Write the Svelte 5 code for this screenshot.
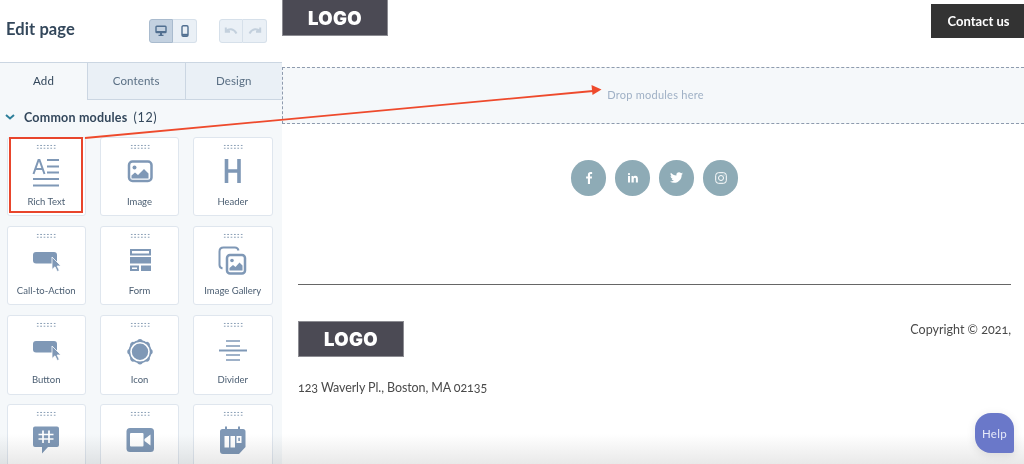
<script>
  const modules = [
    { label: "Rich Text", icon: richText },
    { label: "Image", icon: image },
    { label: "Header", icon: header },
    { label: "Call-to-Action", icon: pointer },
    { label: "Form", icon: form },
    { label: "Image Gallery", icon: gallery },
    { label: "Button", icon: pointer },
    { label: "Icon", icon: badge },
    { label: "Divider", icon: divider },
    { label: "", icon: hash },
    { label: "", icon: video },
    { label: "", icon: calendar },
  ];
  const scallops = [0, 45, 90, 135, 180, 225, 270, 315];
</script>

{#snippet richText()}
  <path class="line" d="M5.5 19 10.500 5h1l5 14M7.500 14h7" />
  <path class="line" d="M19 5h12M19 11.500h12M19 17.500h12M5 24h26M5 30.500h26" />
{/snippet}

{#snippet image()}
  <rect class="line thick" x="7" y="6.500" width="22.500" height="19.500" rx="3.500" />
  <circle class="solid" cx="12.500" cy="12.500" r="2" />
  <path class="solid" d="M9.500 23.500v-3l3.500-3 3 2.500 6-6 4.500 4.500v5z" />
{/snippet}

{#snippet header()}
  <path class="line broad" d="M11.500 4v24M24 4v24M11.500 16H24" />
{/snippet}

{#snippet pointer()}
  <rect class="solid" x="5" y="8" width="24" height="11.500" rx="3" />
  <path class="solid outlined" d="M24 13v12.500l3-2.700 2.300 4.700 2-1-2.200-4.500h3.900z" />
{/snippet}

{#snippet form()}
  <rect class="line" x="9" y="6" width="19" height="4.500" />
  <rect class="solid" x="8" y="13" width="21" height="6.500" />
  <rect class="line" x="9" y="22.500" width="7" height="3.500" />
  <rect class="solid" x="19" y="21.500" width="10" height="5.500" />
{/snippet}

{#snippet gallery()}
  <path class="line" d="M7.500 24.500C5.500 24 4.500 23 4.500 21V7.500C4.500 5 6 3.500 8.500 3.500H20c2 0 3 1 3.500 3" />
  <rect class="line thick" x="12" y="11" width="18" height="18.500" rx="3" />
  <circle class="solid" cx="17" cy="16.500" r="1.800" />
  <path class="solid" d="M14.500 26.500v-2.500l3.500-3 2.500 2 4-4.500 3 3v5z" />
{/snippet}

{#snippet badge()}
  <circle class="solid" cx="18" cy="18.700" r="11.500" />
  {#each scallops as angle}
    <circle class="solid" cx="18" cy="8.700" r="2.700" transform="rotate({angle} 18 18.700)" />
  {/each}
  <circle class="ring" cx="18" cy="18.700" r="9" />
{/snippet}

{#snippet divider()}
  <path class="line thin" d="M11 8h14M11 13h14M11 22h14M11 27h14" />
  <path class="line" d="M4 17.500h28" />
{/snippet}

{#snippet hash()}
  <path class="solid" d="M7 4.500h22a2 2 0 0 1 2 2V23a2 2 0 0 1-2 2H20l-6 6.500V25H7a2 2 0 0 1-2-2V6.500a2 2 0 0 1 2-2z" />
  <path class="cut" d="M15 8.500v12.500M21 8.500v12.500M10.500 12.500h15M10.500 17h15" />
{/snippet}

{#snippet video()}
  <rect class="solid" x="4.500" y="6" width="27.500" height="24" rx="3.500" />
  <rect class="white" x="8" y="11" width="13.500" height="13.500" rx="1" />
  <path class="white" d="M22.500 17 28.500 12.500v11L22.500 19z" />
{/snippet}

{#snippet calendar()}
  <path class="solid" d="M10 4.500h2V7h11V4.500h2V7h3a2.500 2.500 0 0 1 2.500 2.500V25L24 32H8a3 3 0 0 1-3-3V9.500A2.500 2.500 0 0 1 7.500 7H10z" />
  <path class="white" d="M9.500 14h4.500v11.500H9.500zM15.500 14H20v11.500h-4.500zM21.500 14h5v7h-5z" />
  <path class="solid" d="M23.300 15.700h1.600v3.200h-1.600z" />
{/snippet}

<div class="page">
  <aside class="sidebar">
    <header class="top">
      <h1>Edit page</h1>
      <div class="tools">
        <div class="group">
          <button class="active" aria-label="Desktop">
            <svg viewBox="0 0 12 12" width="12" height="12"><rect class="dark-line" x="1" y="1.200" width="10" height="6.300" rx=".8" /><path class="dark" d="M1 6h10v2H1zM5 8h2v2H5zM3.500 9.800h5v1.200h-5z" /></svg>
          </button>
          <button aria-label="Mobile">
            <svg viewBox="0 0 12 12" width="12" height="12"><rect class="dark-line" x="3" y=".8" width="6" height="10.400" rx="1.200" /><path class="dark" d="M3 8.800h6v2H3z" /></svg>
          </button>
        </div>
        <div class="group">
          <button aria-label="Undo">
            <svg viewBox="0 0 14 10" width="14" height="10"><path class="faint" d="M1.800 1.500v4.200H6M2.200 5.300C4.500 2.500 9.500 2 12.500 7.500" /></svg>
          </button>
          <button aria-label="Redo">
            <svg viewBox="0 0 14 10" width="14" height="10"><path class="faint" d="M12.200 1.500v4.200H8M11.800 5.300C9.500 2.500 4.500 2 1.500 7.500" /></svg>
          </button>
        </div>
      </div>
    </header>

    <nav class="tabs">
      <span class="tab current">Add</span>
      <span class="tab">Contents</span>
      <span class="tab">Design</span>
    </nav>

    <div class="section-title">
      <svg viewBox="0 0 10 6" width="10" height="6"><path d="M1 1l4 3.500L9 1" /></svg>
      <strong>Common modules</strong>
      <span>(12)</span>
    </div>

    <div class="cards">
      {#each modules as mod}
        <div class="card">
          <div class="grip"></div>
          <svg class="icon" viewBox="0 0 36 36" width="36" height="36">
            {@render mod.icon()}
          </svg>
          <span class="label">{mod.label}</span>
        </div>
      {/each}
    </div>
  </aside>

  <main class="content">
    <div class="site-header">
      <div class="logo">LOGO</div>
      <a class="contact" href="#contact">Contact us</a>
    </div>

    <div class="dropzone">Drop modules here</div>

    <div class="social">
      <span class="circle">
        <svg viewBox="0 0 24 24" width="12" height="12"><path d="M14 24V13h3.600l.5-4.200H14V6.200c0-1.200.4-2 2.100-2h2.200V.4C17.900.3 16.600 0 15.200 0 12 0 9.800 2 9.800 5.600v3.200H6.200V13h3.600v11z" /></svg>
      </span>
      <span class="circle">
        <svg viewBox="0 0 24 24" width="12" height="12"><path d="M2 8h4v13H2zM4 2a2.200 2.200 0 1 1 0 4.400A2.200 2.200 0 0 1 4 2zM9 8h3.800v1.800c.6-1 2-2.100 4-2.100 4.200 0 5 2.700 5 6.300V21h-4v-6.200c0-1.500 0-3.400-2-3.400s-2.300 1.600-2.300 3.300V21H9z" /></svg>
      </span>
      <span class="circle">
        <svg viewBox="0 0 24 24" width="13" height="13"><path d="M23.953 4.570a10 10 0 0 1-2.825.775 4.958 4.958 0 0 0 2.163-2.723c-.951.555-2.005.959-3.127 1.184a4.920 4.920 0 0 0-8.384 4.482C7.690 8.095 4.067 6.130 1.640 3.162a4.822 4.822 0 0 0-.666 2.475c0 1.710.870 3.213 2.188 4.096a4.904 4.904 0 0 1-2.228-.616v.06a4.923 4.923 0 0 0 3.946 4.827 4.996 4.996 0 0 1-2.212.085 4.936 4.936 0 0 0 4.604 3.417 9.867 9.867 0 0 1-6.102 2.105c-.39 0-.779-.023-1.170-.067a13.995 13.995 0 0 0 7.557 2.209c9.053 0 13.998-7.496 13.998-13.985 0-.21 0-.42-.015-.63A9.935 9.935 0 0 0 24 4.590z" /></svg>
      </span>
      <span class="circle">
        <svg class="insta" viewBox="0 0 12 12" width="12" height="12"><rect x=".7" y=".7" width="10.600" height="10.600" rx="2.800" /><circle cx="6" cy="6" r="2.500" /><circle class="dot" cx="9" cy="3" r=".5" /></svg>
      </span>
    </div>

    <footer class="site-footer">
      <div class="footer-left">
        <div class="logo">LOGO</div>
        <p>123 Waverly Pl., Boston, MA 02135</p>
      </div>
      <p class="copyright">Copyright © 2021,</p>
    </footer>
  </main>

  <div class="fade"></div>

  <div class="highlight"></div>
  <svg class="arrow" viewBox="0 0 1024 464" width="1024" height="464">
    <path class="shaft" d="M85 138 593 91" />
    <path class="head" d="M591.500 85 601.500 89.500 592.500 95z" />
  </svg>

  <div class="help">Help</div>
</div>

<style>
  :global(body) {
    background: #fff;
  }

  .page {
    position: relative;
    display: flex;
    width: 1024px;
    height: 464px;
    overflow: hidden;
    font-family: Lato, "Open Sans", sans-serif;
    color: #33475b;
  }

  .sidebar {
    flex: 0 0 282px;
    background: #f5f8fa;
    box-sizing: border-box;
  }

  .top {
    display: flex;
    align-items: center;
    justify-content: space-between;
    height: 62px;
    padding: 0 15px 4px 6px;
    box-sizing: border-box;
    background: #fff;
  }

  h1 {
    margin: 0;
    font-size: 16.500px;
    font-weight: 700;
    letter-spacing: 0.1px;
  }

  .tools {
    display: flex;
    gap: 22px;
    padding-top: 4px;
  }

  .group {
    display: flex;
  }

  .group button {
    display: flex;
    align-items: center;
    justify-content: center;
    width: 24px;
    height: 24px;
    padding: 0;
    background: #eaf0f6;
    border: 1px solid #d6e0ea;
    border-radius: 3px 0 0 3px;
  }

  .group button + button {
    border-left: 0;
    border-radius: 0 3px 3px 0;
  }

  .group button.active {
    background: #c3d1e0;
    border-color: #a9bbce;
  }

  .dark {
    fill: #516f90;
  }

  .dark-line {
    fill: none;
    stroke: #516f90;
    stroke-width: 1.400;
  }

  .faint {
    fill: none;
    stroke: #c3d0dd;
    stroke-width: 2;
  }

  .tabs {
    display: flex;
    height: 38px;
    font-size: 11.500px;
  }

  .tab {
    flex: 1;
    display: flex;
    align-items: center;
    justify-content: center;
    padding-bottom: 2px;
    background: #eaf0f6;
    color: #5a6f84;
    letter-spacing: 0.1px;
    border-top: 1px solid #cbd6e2;
    border-bottom: 1px solid #cbd6e2;
    box-sizing: border-box;
  }

  .tab.current {
    flex: 0 0 88px;
    background: #f5f8fa;
    color: #33475b;
    border-bottom: 0;
    border-right: 1px solid #cbd6e2;
  }

  .tab:last-child {
    border-left: 1px solid #cbd6e2;
  }

  .section-title {
    display: flex;
    align-items: center;
    height: 34px;
    padding: 0 0 0 5px;
    font-size: 12.500px;
  }

  .section-title svg {
    fill: none;
    stroke: #2d7f9a;
    stroke-width: 2;
    margin-right: 9px;
  }

  .section-title strong {
    font-weight: 700;
    letter-spacing: 0.2px;
  }

  .section-title span {
    margin-left: 6px;
    letter-spacing: 0.7px;
  }

  .cards {
    display: grid;
    grid-template-columns: repeat(3, 79.500px);
    grid-auto-rows: 79.400px;
    column-gap: 13.750px;
    row-gap: 9.700px;
    padding: 3px 0 0 6.500px;
  }

  .card {
    display: flex;
    flex-direction: column;
    align-items: center;
    background: #fff;
    border: 1px solid #dfe6ee;
    border-radius: 3px;
    box-sizing: border-box;
  }

  .grip {
    width: 20px;
    height: 5px;
    margin-top: 5.500px;
    background-image: radial-gradient(circle, #8097af 0.8px, transparent 1px);
    background-size: 3.400px 2.800px;
  }

  .icon {
    margin-top: 6.500px;
    flex: none;
  }

  .label {
    margin-top: 5px;
    font-size: 9.500px;
    color: #4b5e72;
    white-space: nowrap;
  }

  .line {
    fill: none;
    stroke: #7f98b6;
    stroke-width: 2;
  }

  .line.thick {
    stroke-width: 2.500;
  }

  .line.broad {
    stroke-width: 3.600;
  }

  .line.thin {
    stroke-width: 1.500;
  }

  .solid {
    fill: #7f98b6;
  }

  .solid.outlined {
    stroke: #fff;
    stroke-width: 0.8;
  }

  .white {
    fill: #fff;
  }

  .ring {
    fill: #7f98b6;
    stroke: #fff;
    stroke-width: 1.600;
  }

  .cut {
    fill: none;
    stroke: #fff;
    stroke-width: 1.700;
  }

  .content {
    flex: 1;
    min-width: 0;
    background: #fff;
    color: #3f3f3f;
  }

  .site-header {
    display: flex;
    justify-content: space-between;
    align-items: flex-start;
    height: 67px;
    box-sizing: border-box;
  }

  .logo {
    display: flex;
    align-items: center;
    justify-content: center;
    width: 106px;
    height: 36px;
    background: #4b4a54;
    border: 1px solid #8c8c92;
    border-width: 0 1px 1px 1px;
    color: #fff;
    font-family: Inter, "Liberation Sans", sans-serif;
    font-size: 18.500px;
    font-weight: 900;
    letter-spacing: 0.3px;
    box-sizing: border-box;
  }

  .contact {
    display: flex;
    align-items: center;
    justify-content: center;
    width: 93px;
    height: 34px;
    margin-top: 4px;
    padding-left: 2px;
    background: #333;
    color: #fff;
    font-size: 13px;
    font-weight: 700;
    text-decoration: none;
    box-sizing: border-box;
  }

  .dropzone {
    display: flex;
    align-items: center;
    justify-content: center;
    height: 57px;
    padding-bottom: 3px;
    padding-left: 4px;
    background: #f5f8fa;
    border-top: 1px dashed #8e9bae;
    border-bottom: 1px dashed #8e9bae;
    border-left: 1px dashed #8e9bae;
    box-sizing: border-box;
    color: #9fb0c5;
    font-size: 11px;
    letter-spacing: 0.25px;
  }

  .social {
    display: flex;
    justify-content: center;
    gap: 8.500px;
    margin-top: 36px;
    padding-left: 3px;
  }

  .circle {
    display: flex;
    align-items: center;
    justify-content: center;
    width: 35.500px;
    height: 35.500px;
    border-radius: 50%;
    background: #8eabb6;
  }

  .circle svg {
    fill: #fff;
  }

  .insta {
    fill: none !important;
    stroke: #fff;
    stroke-width: 1;
  }

  .insta .dot {
    fill: #fff;
    stroke: none;
  }

  .site-footer {
    display: flex;
    justify-content: space-between;
    align-items: flex-start;
    margin: 88px 13px 0 16px;
    padding-top: 36px;
    border-top: 1px solid #666;
  }

  .site-footer .logo {
    border: 1px solid #8c8c92;
  }

  .site-footer p {
    margin: 0;
    font-size: 12.500px;
    color: #4a4a4a;
    font-variant-numeric: oldstyle-nums;
  }

  .footer-left p {
    margin-top: 23px;
    letter-spacing: -0.1px;
  }

  .site-footer .copyright {
    margin-top: 1px;
    line-height: 16px;
  }

  .fade {
    position: absolute;
    left: 0;
    right: 0;
    bottom: 0;
    height: 30px;
    background: linear-gradient(#fff, #e9e9e9);
    mix-blend-mode: multiply;
    pointer-events: none;
  }

  .highlight {
    position: absolute;
    left: 9px;
    top: 137px;
    width: 74px;
    height: 76px;
    border: 2px solid #e8452c;
    box-sizing: border-box;
  }

  .arrow {
    position: absolute;
    left: 0;
    top: 0;
    pointer-events: none;
  }

  .shaft {
    fill: none;
    stroke: #ee4a2c;
    stroke-width: 1.800;
  }

  .head {
    fill: #ee4a2c;
  }

  .help {
    position: absolute;
    left: 975px;
    top: 413px;
    display: flex;
    align-items: center;
    justify-content: center;
    width: 39px;
    height: 40px;
    background: #6a78c9;
    border-radius: 16px 16px 3px 16px;
    color: #e6e9f8;
    font-size: 11.500px;
    letter-spacing: 0.3px;
    box-shadow: 0 2px 10px rgba(0, 0, 0, 0.1);
  }
</style>
